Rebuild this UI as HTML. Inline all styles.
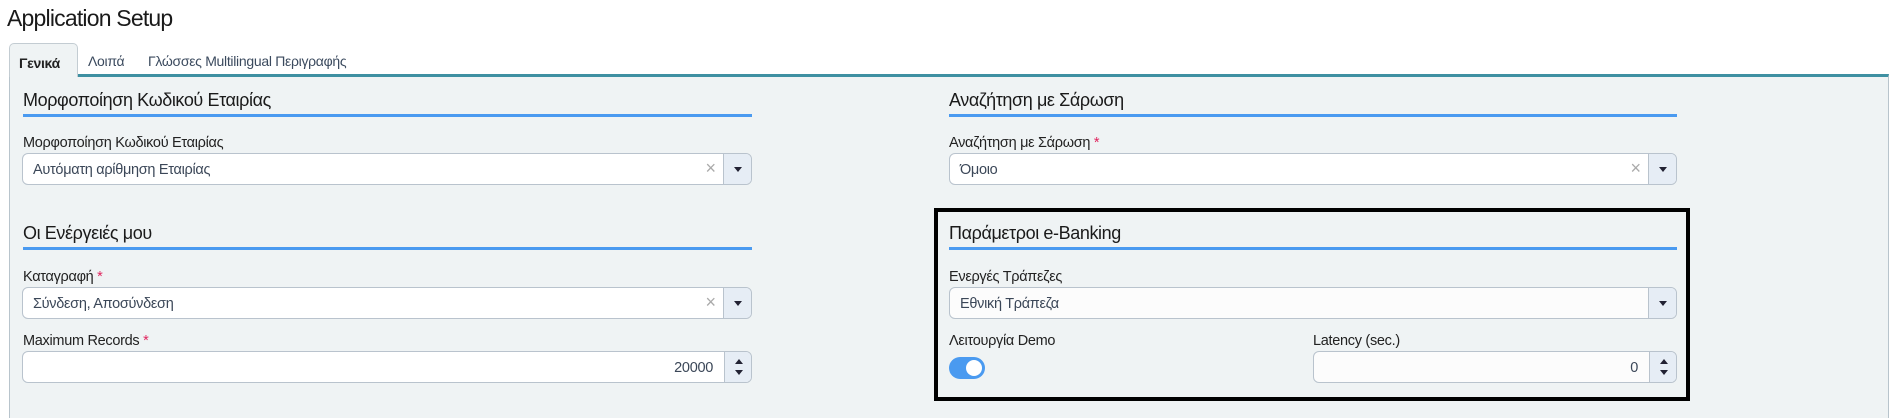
<!DOCTYPE html>
<html><head><meta charset="utf-8"><style>
*{box-sizing:border-box;margin:0;padding:0}
body{width:1889px;height:418px;background:#fff;font-family:"Liberation Sans","DejaVu Sans",sans-serif;color:#222;position:relative;overflow:hidden}
.a{position:absolute;white-space:nowrap}
.title{left:7px;top:5px;font-size:23px;letter-spacing:-0.8px;color:#1a1a1a}
.panel{position:absolute;left:9px;top:74px;width:1880px;height:344px;background:#eff3f4;border-left:1px solid #b8c4cc;border-right:1px solid #b8c4cc;border-top:3px solid #3e90a2}
.tab{position:absolute;left:9px;top:43px;width:69px;height:34px;background:#eff3f4;border:1px solid #c3ccd2;border-bottom:none;border-radius:5px 5px 0 0;font-size:14px;font-weight:bold;padding:11px 0 0 9px;letter-spacing:-0.3px}
.tl{font-size:14px;color:#3b4a5e;top:53px;letter-spacing:-0.3px}
.h{font-size:18px;letter-spacing:-0.4px;color:#1a1a1a}
.line{position:absolute;height:3px;background:#4a9af0}
.lab{font-size:14.5px;letter-spacing:-0.3px;color:#222}
.req{color:#e0245e}
.inp{position:absolute;height:32px;background:#fff;border:1px solid #b9c3cd;border-radius:6px;overflow:hidden}
.inp .t{position:absolute;left:10px;top:8px;font-size:14.5px;color:#3b4758;letter-spacing:-0.3px}
.inp .btn{position:absolute;right:0;top:0;width:28px;height:100%;background:#e6edf5;border-left:1px solid #b9c3cd}
.inp .x{position:absolute;top:4px;font-size:18px;color:#aaa}
.dn{position:absolute;left:10px;top:13px;width:0;height:0;border-left:4px solid transparent;border-right:4px solid transparent;border-top:5px solid #223}
.up{position:absolute;left:10px;top:7px;width:0;height:0;border-left:4px solid transparent;border-right:4px solid transparent;border-bottom:5px solid #223}
.dn2{position:absolute;left:10px;top:18px;width:0;height:0;border-left:4px solid transparent;border-right:4px solid transparent;border-top:5px solid #223}
.box{position:absolute;left:934px;top:208px;width:756px;height:193px;border:4px solid #000}
.tog{position:absolute;left:949px;top:357px;width:36px;height:22px;border-radius:11px;background:#4a9af0}
.tog:after{content:"";position:absolute;right:3px;top:3px;width:16px;height:16px;border-radius:50%;background:#fff}
</style></head><body>
<div class="a title">Application Setup</div>
<div class="panel"></div>
<div class="tab">Γενικά</div>
<div class="a tl" style="left:88px">Λοιπά</div>
<div class="a tl" style="left:148px">Γλώσσες Multilingual Περιγραφής</div>

<div class="a h" style="left:23px;top:90px">Μορφοποίηση Κωδικού Εταιρίας</div>
<div class="line" style="left:23px;top:114px;width:729px"></div>
<div class="a lab" style="left:23px;top:135px">Μορφοποίηση Κωδικού Εταιρίας</div>
<div class="inp" style="left:22px;top:153px;width:730px"><div class="t">Αυτόματη αρίθμηση Εταιρίας</div><div class="x" style="right:35px">×</div><div class="btn"><div class="dn"></div></div></div>

<div class="a h" style="left:23px;top:223px">Οι Ενέργειές μου</div>
<div class="line" style="left:23px;top:247px;width:729px"></div>
<div class="a lab" style="left:23px;top:269px">Καταγραφή <span class="req">*</span></div>
<div class="inp" style="left:22px;top:287px;width:730px"><div class="t">Σύνδεση, Αποσύνδεση</div><div class="x" style="right:35px">×</div><div class="btn"><div class="dn"></div></div></div>
<div class="a lab" style="left:23px;top:333px">Maximum Records <span class="req">*</span></div>
<div class="inp" style="left:22px;top:351px;width:730px"><div class="t" style="left:auto;right:38px">20000</div><div class="btn" style="width:27px"><div class="up"></div><div class="dn2"></div></div></div>

<div class="a h" style="left:949px;top:90px">Αναζήτηση με Σάρωση</div>
<div class="line" style="left:949px;top:114px;width:728px"></div>
<div class="a lab" style="left:949px;top:135px">Αναζήτηση με Σάρωση <span class="req">*</span></div>
<div class="inp" style="left:949px;top:153px;width:728px"><div class="t">Όμοιο</div><div class="x" style="right:35px">×</div><div class="btn"><div class="dn"></div></div></div>

<div class="box"></div>
<div class="a h" style="left:949px;top:223px">Παράμετροι e-Banking</div>
<div class="line" style="left:949px;top:247px;width:728px"></div>
<div class="a lab" style="left:949px;top:269px">Ενεργές Τράπεζες</div>
<div class="inp" style="left:949px;top:287px;width:728px;background:#fcfcfc"><div class="t">Εθνική Τράπεζα</div><div class="btn"><div class="dn"></div></div></div>
<div class="a lab" style="left:949px;top:333px">Λειτουργία Demo</div>
<div class="tog"></div>
<div class="a lab" style="left:1313px;top:333px">Latency (sec.)</div>
<div class="inp" style="left:1313px;top:351px;width:364px;background:#fcfcfc"><div class="t" style="left:auto;right:38px">0</div><div class="btn" style="width:27px"><div class="up"></div><div class="dn2"></div></div></div>
</body></html>
